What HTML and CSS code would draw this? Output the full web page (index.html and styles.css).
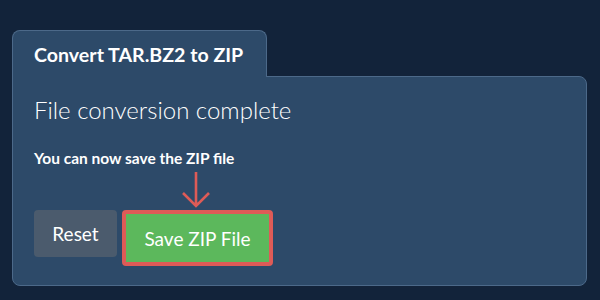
FILE: index.html
```html
<!DOCTYPE html>
<html lang="en">
<head>
  <meta charset="UTF-8" />
  <title>Convert TAR.BZ2 to ZIP</title>
  <link rel="stylesheet" href="styles.css">
</head>
<body>
  <div class="converter">
    <div class="tab">Convert TAR.BZ2 to ZIP</div>
    <div class="panel">
      <h2 class="status">File conversion complete</h2>
      <p class="hint">You can now save the ZIP file</p>
      <div class="actions">
        <button class="btn btn-reset">Reset</button>
        <div class="save-wrap">
          <svg class="arrow" width="30" height="38" viewBox="0 0 30 38">
            <path d="M15 1 V35 M2 22 L15 35 L28 22" fill="none" stroke="#de5b57" stroke-width="2.6" />
          </svg>
          <button class="btn btn-save">Save ZIP File</button>
        </div>
      </div>
    </div>
  </div>
</body>
</html>
```

FILE: styles.css
```css
body {
  font-family: Lato, "Open Sans", sans-serif;
  background-color: #12233a;
  color: #ffffff;
  margin: 0;
  padding: 30px 13px 14px 12px;
}
.converter {
  display: flex;
  flex-direction: column;
  align-items: flex-start;
}
.tab {
  position: relative;
  z-index: 1;
  box-sizing: border-box;
  width: 255px;
  height: 47px;
  margin-bottom: -1px;
  padding: 12px 0 0 21px;
  background-color: #2d4a69;
  border: 1px solid #4c6989;
  border-bottom: none;
  border-radius: 8px 8px 0 0;
  font-size: 19.6px;
  font-weight: 700;
}
.panel {
  box-sizing: border-box;
  width: 575px;
  height: 210px;
  padding: 18px 21px 0 21px;
  background-color: #2d4a69;
  border: 1px solid #4c6989;
  border-radius: 0 8px 8px 8px;
}
.status {
  margin: 0;
  font-size: 24px;
  font-weight: 300;
  line-height: 30px;
}
.hint {
  margin: 24px 0 0 0;
  font-size: 15.5px;
  font-weight: 700;
}
.actions {
  display: flex;
  align-items: flex-start;
  gap: 5px;
  margin-top: 43px;
}
.save-wrap {
  position: relative;
}
.arrow {
  position: absolute;
  left: 59px;
  top: -39px;
}
.btn {
  font-family: Lato, "Open Sans", sans-serif;
  font-size: 19px;
  color: #fff;
  border: none;
  border-radius: 4px;
  cursor: pointer;
}
.btn-reset {
  width: 83px;
  height: 47px;
  background-color: #4b5b6d;
}
.btn-save {
  box-sizing: border-box;
  width: 151px;
  height: 56px;
  background-color: #5cb85c;
  border: 4px solid #de5b57;
  border-radius: 4px;
}
```
